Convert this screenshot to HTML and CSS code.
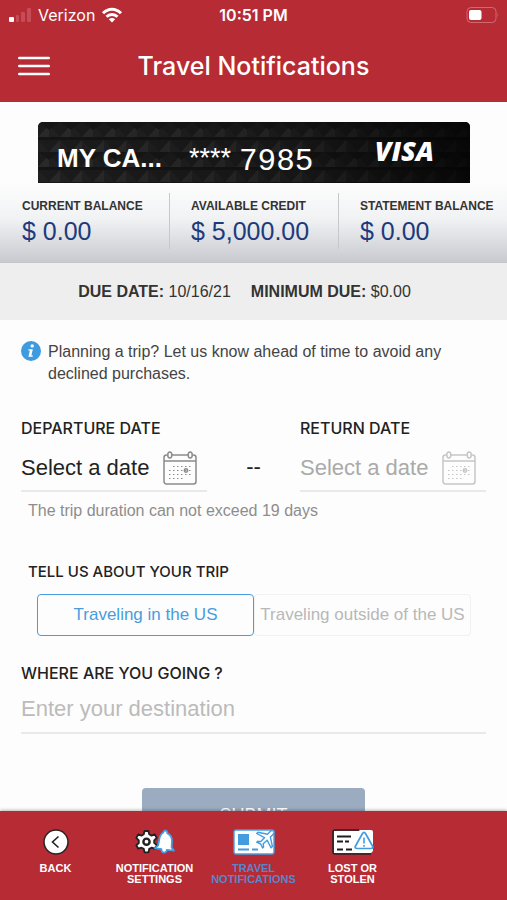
FILE: index.html
```html
<!DOCTYPE html>
<html lang="en">
<head>
<meta charset="utf-8">
<meta name="viewport" content="width=device-width, initial-scale=1">
<title>Travel Notifications</title>
<link rel="stylesheet" href="styles.css">
</head>
<body>
<div class="app">
  <header class="header">
    <div class="status">
      <div class="carrier">
        <svg width="24" height="16" viewBox="0 0 24 16" aria-hidden="true">
          <rect x="1" y="10" width="5" height="5" rx="1" fill="#fff"/>
          <g fill="#c64d58"><rect x="8" y="8" width="3" height="7" rx="1"/><rect x="13" y="5" width="4" height="10" rx="1"/><rect x="19" y="1" width="4" height="14" rx="1"/></g>
        </svg>
        <span>Verizon</span>
        <svg width="22" height="16" viewBox="0 0 22 16" fill="none" stroke="#fff" stroke-width="3" aria-hidden="true">
          <path d="M2 6.2C7.2.8 14.800.8 20 6.200M5.500 9.700C8.600 6.600 13.400 6.600 16.500 9.700"/>
          <path d="M11 15.500 7.800 12.200C9.600 10.600 12.400 10.600 14.200 12.200Z" fill="#fff" stroke="none"/>
        </svg>
      </div>
      <span class="clock">10:51 PM</span>
      <div class="battery">
        <svg width="33" height="16" viewBox="0 0 33 16" aria-hidden="true">
          <rect x="1" y=".5" width="29" height="15" rx="4" fill="none" stroke="#d06872"/>
          <rect x="3" y="3" width="12.500" height="10" rx="2" fill="#fff"/>
          <path d="M31.500 5.500q1.500 2.500 0 5z" fill="#d06872"/>
        </svg>
      </div>
    </div>
    <div class="titlebar">
      <button class="menu" type="button" aria-label="Menu">
        <svg width="32" height="20" viewBox="0 0 32 20" stroke="#fff" stroke-width="2.400" stroke-linecap="round" aria-hidden="true"><path d="M1.200 2h29.600M1.200 10h29.600M1.200 18h29.600"/></svg>
      </button>
      <h1>Travel Notifications</h1>
    </div>
  </header>

  <main class="content">
    <section class="card">
      <svg class="card-texture" aria-hidden="true">
        <defs>
          <pattern id="facets" width="22" height="30" patternUnits="userSpaceOnUse">
            <rect width="22" height="30" fill="#1b1b1b"/>
            <path d="M0 15 11 3v12z" fill="#292929"/><path d="M11 3 22 15H11z" fill="#202020"/><path d="M0 0h22L11 8z" fill="#161616"/>
            <path d="M11 30 22 18v12z" fill="#292929"/><path d="M0 18 11 30H0z" fill="#202020"/><path d="M0 15h22v3H0z" fill="#141414"/>
          </pattern>
          <linearGradient id="shade"><stop offset="0" stop-color="#000" stop-opacity="0"/><stop offset=".6" stop-color="#000" stop-opacity=".2"/><stop offset="1" stop-color="#000" stop-opacity=".75"/></linearGradient>
        </defs>
        <rect width="100%" height="100%" fill="url(#facets)"/>
        <rect width="100%" height="100%" fill="url(#shade)"/>
      </svg>
      <span class="card-name">MY CA...</span>
      <span class="card-mask">****</span>
      <span class="card-digits">7985</span>
      <span class="card-brand">VISA</span>
    </section>

    <dl class="balances">
      <div><dt>CURRENT BALANCE</dt><dd>$ 0.00</dd></div>
      <div><dt>AVAILABLE CREDIT</dt><dd>$ 5,000.00</dd></div>
      <div><dt>STATEMENT BALANCE</dt><dd>$ 0.00</dd></div>
    </dl>
    <div class="due">
      <span><b>DUE DATE:</b> 10/16/21</span>
      <span><b>MINIMUM DUE:</b> $0.00</span>
    </div>

    <form class="form">
      <div class="info">
        <svg width="20" height="20" viewBox="0 0 20 20" aria-hidden="true"><circle cx="10" cy="10" r="10" fill="#3e9be0"/><circle cx="11.200" cy="4.900" r="1.700" fill="#fff"/><path d="M7.500 8.200h4.300l-1.400 6.300h1.500l-.3 1.300H7.400l1.500-6.300H7.200z" fill="#fff"/></svg>
        <p>Planning a trip? Let us know ahead of time to avoid any declined purchases.</p>
      </div>

      <div class="dates">
        <div class="date">
          <label for="departure">DEPARTURE DATE</label>
          <button id="departure" type="button">Select a date
            <svg width="34" height="34" viewBox="0 0 34 34" fill="none" stroke="currentColor" stroke-width="1.500" aria-hidden="true">
              <path d="M4.500 4H3.500A2.500 2.500 0 0 0 1 6.500V30.500A2.500 2.500 0 0 0 3.500 33H30.500A2.500 2.500 0 0 0 33 30.500V6.500A2.500 2.500 0 0 0 30.500 4H29.500M9 4H25M1 10H33"/>
              <ellipse cx="6.800" cy="4" rx="2" ry="3"/><ellipse cx="27.200" cy="4" rx="2" ry="3"/>
              <path d="M10 15.500H29M6 19.500H29M6 23.500H29M6 27.500H21" stroke-width="1.200" stroke-dasharray="1.500 2.500"/>
              <circle cx="23" cy="19.500" r="1.700"/>
            </svg>
          </button>
        </div>
        <span class="dash">--</span>
        <div class="date">
          <label for="return">RETURN DATE</label>
          <button id="return" type="button" disabled>Select a date
            <svg width="34" height="34" viewBox="0 0 34 34" fill="none" stroke="currentColor" stroke-width="1.500" aria-hidden="true">
              <path d="M4.500 4H3.500A2.500 2.500 0 0 0 1 6.500V30.500A2.500 2.500 0 0 0 3.500 33H30.500A2.500 2.500 0 0 0 33 30.500V6.500A2.500 2.500 0 0 0 30.500 4H29.500M9 4H25M1 10H33"/>
              <ellipse cx="6.800" cy="4" rx="2" ry="3"/><ellipse cx="27.200" cy="4" rx="2" ry="3"/>
              <path d="M10 15.500H29M6 19.500H29M6 23.500H29M6 27.500H21" stroke-width="1.200" stroke-dasharray="1.500 2.500"/>
              <circle cx="23" cy="19.500" r="1.700"/>
            </svg>
          </button>
        </div>
      </div>
      <p class="hint">The trip duration can not exceed 19 days</p>

      <fieldset class="region">
        <legend>TELL US ABOUT YOUR TRIP</legend>
        <div class="segments">
          <label><input type="radio" name="region" checked><span>Traveling in the US</span></label>
          <label><input type="radio" name="region"><span>Traveling outside of the US</span></label>
        </div>
      </fieldset>

      <div class="destination">
        <label for="destination">WHERE ARE YOU GOING ?</label>
        <input id="destination" type="text" placeholder="Enter your destination">
      </div>
      <button class="submit" type="submit">SUBMIT</button>
    </form>
  </main>

  <nav class="tabs">
    <a href="#back">
      <svg width="26" height="26" viewBox="0 0 26 26" aria-hidden="true"><circle cx="13" cy="13" r="12" fill="#fff" stroke="#2b2224" stroke-width="1.500"/><path d="m15.500 7.500-6 5.500 6 5.500" fill="none" stroke="#222" stroke-width="1.600"/></svg>
      <span>BACK</span>
    </a>
    <a href="#settings">
      <svg width="40" height="26" viewBox="0 0 40 26" aria-hidden="true">
        <path d="M9.500 2h4l.7 3.300 2.300 1.300 3.200-1.200 2 3.500-2.500 2.400v2.600l2.500 2.300-2 3.500-3.200-1-2.300 1.200-.7 3.400h-4l-.7-3.400-2.300-1.200-3.200 1-2-3.500L3.800 14v-2.700L1.300 8.900l2-3.500 3.200 1.200 2.300-1.300z" fill="#fff" stroke="#241e20" stroke-width="1.800" stroke-linejoin="round"/>
        <circle cx="11.500" cy="12.700" r="3.100" fill="#fff" stroke="#241e20" stroke-width="2.400"/>
        <path d="M28.300 3.500c.4-3 4.400-2.400 3.900.6 4.200 1.900 5.100 5.300 4.700 9.300l-.3 5 2.400 3.300-7.200-.8c-.5 4-5.700 3.300-5.400-.8l-6.600-1 3.300-2.600 1-5.200c.6-3.700 1.500-6.600 4.200-7.800z" fill="#fff" stroke="#439fe2" stroke-width="1.800" stroke-linejoin="round"/>
      </svg>
      <span>NOTIFICATION SETTINGS</span>
    </a>
    <a href="#travel" class="active" aria-current="page">
      <svg width="42" height="26" viewBox="0 0 42 26" aria-hidden="true">
        <rect x="1" y="1" width="40" height="24" rx="2" fill="#fff" stroke="#4a9fe0" stroke-width="1.400"/>
        <rect x="5" y="5" width="11" height="11" fill="#439cdf"/>
        <path d="M5 20.500h11M19 20.500h6" stroke="#439cdf" stroke-width="2"/>
        <path d="M40.500 2c-1-1-2.400-.4-3.300.5l-2.700 2.700-9.500-2-1.300 1.300 7.800 4.200-3.700 3.900-3.100-.4-1 1 4 1.800 1.900 4 1-1-.4-3.200 3.900-3.600 4 7.600 1.300-1.300-2-9.400 2.600-2.700c1-1 1.500-2.400.5-3.400z" fill="#fff" stroke="#439cdf" stroke-width="1.400" stroke-linejoin="round"/>
      </svg>
      <span>TRAVEL NOTIFICATIONS</span>
    </a>
    <a href="#lost">
      <svg width="42" height="26" viewBox="0 0 42 26" aria-hidden="true">
        <path d="M27 1H3a2 2 0 0 0-2 2v20a2 2 0 0 0 2 2h36" fill="none" stroke="#2b2024" stroke-width="1.600"/>
        <path d="M2 2h25l1-1h11a2 2 0 0 1 2 2v19l-2 2H2z" fill="#fff"/>
        <path d="M5 7.500h14M5 12.500h6M13 12.500h4M5 20.500h6M14 20.500h6" stroke="#211c1e" stroke-width="2.200"/>
        <path d="M30.500 4.500c.9-1.500 2.100-1.500 3 0l7 12.500c.8 1.500.1 2.500-1.500 2.500H25c-1.600 0-2.300-1-1.500-2.500z" fill="#fff" stroke="#439cdf" stroke-width="1.700"/>
        <path d="M32 8.500v6M32 16v1.800" stroke="#439cdf" stroke-width="1.600"/>
      </svg>
      <span>LOST OR<br>STOLEN</span>
    </a>
  </nav>
</div>
</body>
</html>
```

FILE: styles.css
```css
* { box-sizing: border-box; }

body {
  margin: 0;
  background: #fdfdfd;
  color: #222;
  font-family: "Liberation Sans", Arial, sans-serif;
  font-size: 16px;
}

h1, p, dl, dd, fieldset, legend { margin: 0; padding: 0; border: 0; }
button, input { font: inherit; }
svg { display: block; flex: none; }

.app {
  display: flex;
  flex-direction: column;
  height: 100vh;
}

/* Header */
.header {
  flex: none;
  height: 102px;
  background: #b72b35;
  color: #fff;
}

.status {
  display: grid;
  grid-template-columns: 1fr auto 1fr;
  align-items: center;
  height: 30px;
  padding: 0 8px;
  font: 500 16px/30px Inter, sans-serif;
}

.carrier { display: flex; align-items: center; gap: 6px; font-weight: 400; }
.clock { font-weight: 600; }
.battery { justify-self: end; }

.titlebar {
  display: grid;
  grid-template-columns: 32px 1fr 32px;
  align-items: center;
  height: 72px;
  padding: 0 18px;
}

.menu { padding: 0; border: 0; background: none; }

h1 {
  text-align: center;
  font: 500 25px/32px Inter, sans-serif;
}

/* Account summary */
.content {
  flex: 1;
  min-height: 0;
  overflow-y: auto;
  scrollbar-width: none;
}

.card {
  position: relative;
  display: flex;
  align-items: center;
  height: 61px;
  margin: 20px 37px 0 38px;
  padding: 12px 36px 0 19px;
  border-radius: 5px 5px 0 0;
  overflow: hidden;
  background: #1b1b1b;
  color: #fff;
}

.card-texture { position: absolute; inset: 0; width: 100%; height: 100%; }
.card span { position: relative; }
.card-name { font-size: 26px; font-weight: 700; }
.card-mask { margin-left: 27px; font-size: 27px; }
.card-digits { margin: 6px 0 0 8px; font: 31px "Liberation Mono", monospace; }
.card-brand { margin: 0 0 16px auto; font: italic 800 27px "Open Sans", sans-serif; }

.balances {
  display: flex;
  height: 80px;
  padding: 10px 0 13px;
  border-bottom: 1px solid #c3c5ca;
  background: linear-gradient(#fdfdfd, #f1f2f4 45%, #c8cad0);
}

.balances div { flex: 1 1 0; min-width: 0; padding: 6px 0 0 22px; white-space: nowrap; }
.balances div + div { padding-left: 21px; border-left: 1px solid #c6c8cc; }
dt { font-size: 12px; font-weight: 700; line-height: 14px; color: #333; }
dd { font-size: 25px; line-height: 36px; color: #1c3a7c; }

.due {
  display: flex;
  justify-content: center;
  gap: 20px;
  padding: 1px 18px 0 0;
  background: #eee;
  color: #333;
  line-height: 56px;
}

/* Form */
.form { padding: 21px 21px 20px; }
.info { display: flex; gap: 7px; color: #444; line-height: 22px; }

.dates { display: flex; justify-content: space-between; margin-top: 31px; }
.date { flex: 0 0 40%; }
.date label, .destination label, legend {
  display: block;
  font: 500 16px/24px Inter, sans-serif;
}

.date button {
  display: flex;
  align-items: center;
  gap: 14px;
  width: 100%;
  height: 52px;
  padding: 6px 0 0;
  border: 0;
  border-bottom: 2px solid #e9e9e9;
  background: none;
  color: #222;
  font-size: 22px;
}

.date svg { color: #8b8b8b; }
.date button:disabled { color: #aaa; }
.date button:disabled svg { color: #c6c6c6; }
.dash { padding-top: 38px; font-size: 22px; line-height: 26px; }
.hint { margin: 8px 7px 0; color: #8d8d8d; line-height: 22px; }

.region { margin: 38px 0 0 7px; }
.region legend { font-size: 15px; }
.segments { display: flex; margin: 10px 15px 0 9px; }
.segments label { flex: 1 1 0; white-space: nowrap; }
.segments input { position: absolute; opacity: 0; }
.segments span {
  display: block;
  border: 1px solid #f1f1f1;
  border-radius: 4px;
  text-align: center;
  color: #b8b8b8;
  font-size: 17px;
  line-height: 40px;
}
.segments input:checked + span { border-color: #479ddf; color: #479ddf; }

.destination { margin-top: 25px; }
.destination input {
  width: 100%;
  height: 49px;
  padding: 0;
  border: 0;
  border-bottom: 2px solid #e9e9e9;
  background: none;
  font-size: 22px;
}
.destination input::placeholder { color: #bbb; opacity: 1; }

.submit {
  display: block;
  width: 48%;
  height: 54px;
  margin: 54px auto 0;
  border: 0;
  border-radius: 4px;
  background: #9bacc1;
  color: #fff;
  font-size: 18px;
}

/* Bottom navigation */
.tabs {
  flex: none;
  display: grid;
  grid-template-columns: repeat(5, 1fr);
  height: 89px;
  padding: 18px 6px 0;
  background: #b72b35;
  box-shadow: 0 -1px 3px #0004;
}

.tabs a {
  display: flex;
  flex-direction: column;
  align-items: center;
  gap: 8px;
  color: #fff;
  font-size: 11px;
  font-weight: 700;
  line-height: 11px;
  text-align: center;
  text-decoration: none;
}
.tabs .active { color: #5b84cb; }
```
